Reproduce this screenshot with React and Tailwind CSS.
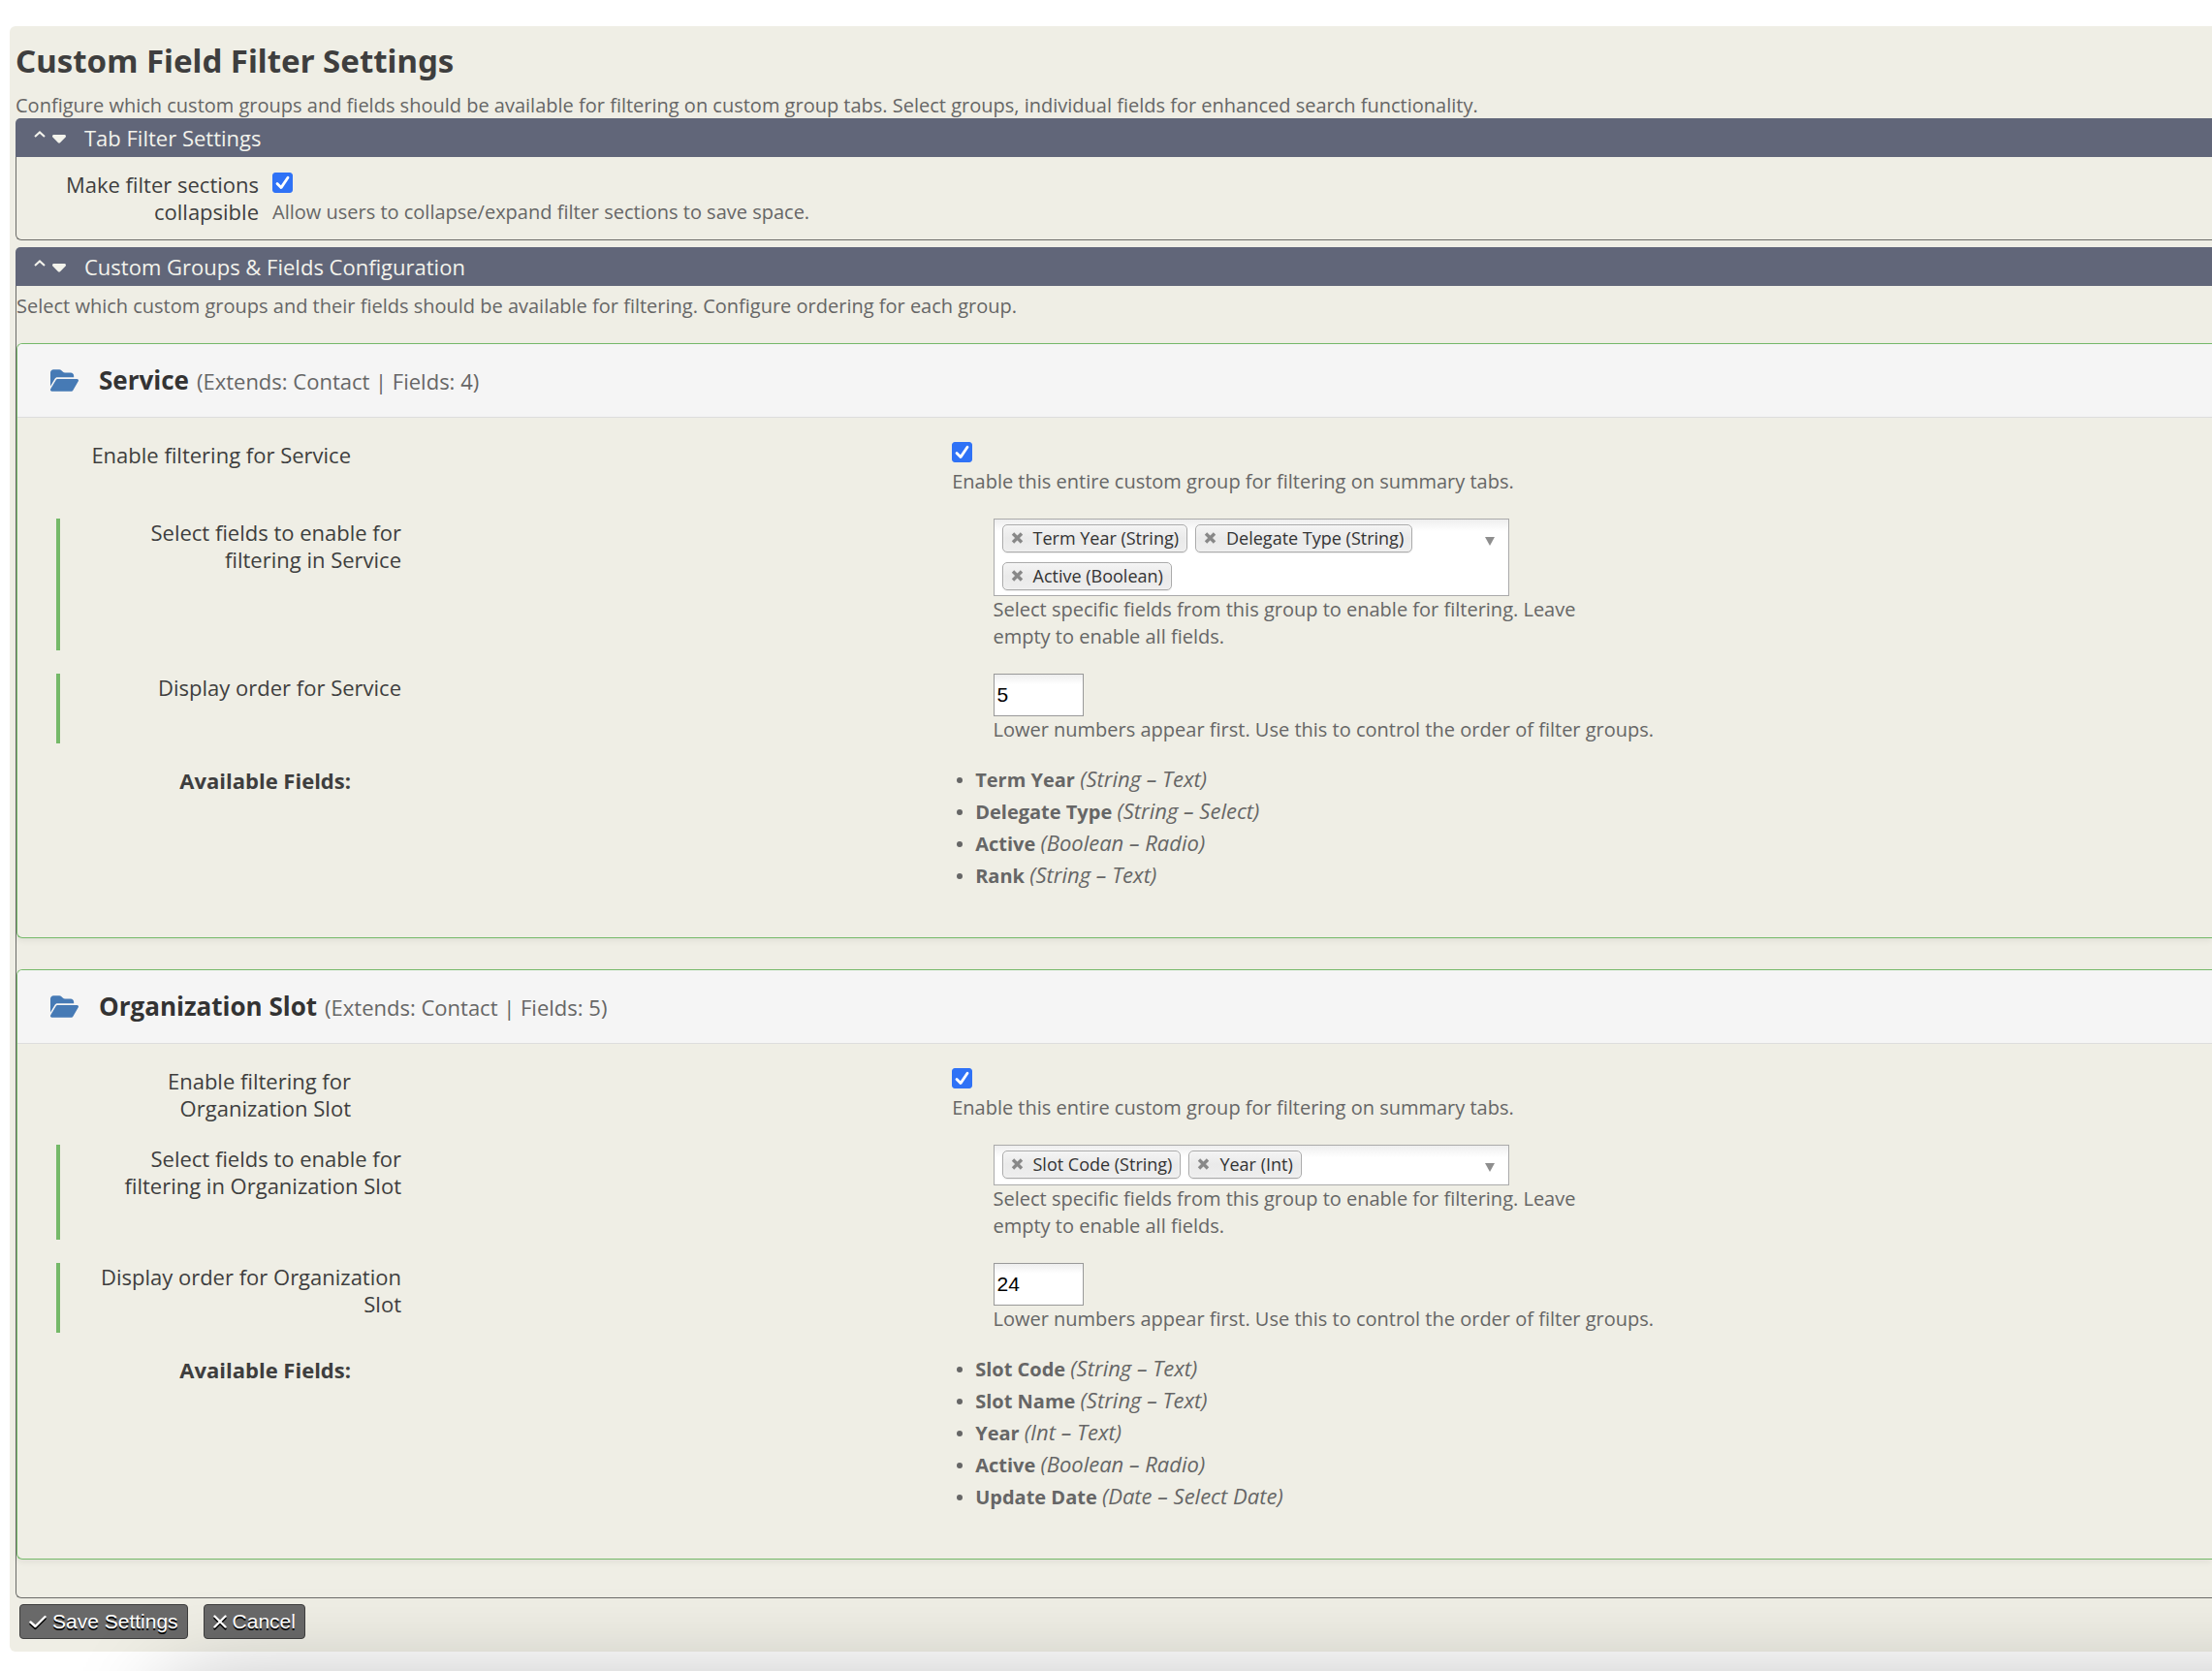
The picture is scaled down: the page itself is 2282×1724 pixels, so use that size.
import { FaFolderOpen } from "react-icons/fa6";

const groups = [
  {
    id: "service",
    name: "Service",
    extendsType: "Contact",
    order: 5,
    selected: ["Term Year (String)", "Delegate Type (String)", "Active (Boolean)"],
    fields: [
      ["Term Year", "(String – Text)"],
      ["Delegate Type", "(String – Select)"],
      ["Active", "(Boolean – Radio)"],
      ["Rank", "(String – Text)"],
    ],
  },
  {
    id: "organization-slot",
    name: "Organization Slot",
    extendsType: "Contact",
    order: 24,
    selected: ["Slot Code (String)", "Year (Int)"],
    fields: [
      ["Slot Code", "(String – Text)"],
      ["Slot Name", "(String – Text)"],
      ["Year", "(Int – Text)"],
      ["Active", "(Boolean – Radio)"],
      ["Update Date", "(Date – Select Date)"],
    ],
  },
];

function Checkbox({ id }) {
  return (
    <span className="relative block size-[21px]">
      <input
        id={id}
        type="checkbox"
        defaultChecked
        className="peer block size-[21px] appearance-none rounded-[3px] border border-[#8a8a8a] bg-white checked:border-[#2f72f6] checked:bg-[#2f72f6]"
      />
      <svg viewBox="0 0 21 21" className="pointer-events-none absolute inset-0 hidden size-[21px] peer-checked:block" aria-hidden="true">
        <path d="M5 11.5 9 15.6 16 5.2" fill="none" stroke="white" strokeWidth="2.8" strokeLinecap="round" strokeLinejoin="round" />
      </svg>
    </span>
  );
}

function SectionHeader({ children }) {
  return (
    <button type="button" className="flex h-10 w-full items-center rounded-tl-[5px] bg-[#616679] pl-[19px] text-left text-[22px] text-[#f3f3ec]">
      <svg viewBox="0 0 12 7" className="mb-2 h-[7px] w-3" aria-hidden="true">
        <path d="M1 6 6 1.4 11 6" fill="none" stroke="currentColor" strokeWidth="2" />
      </svg>
      <svg viewBox="0 0 14 9" className="ml-[7px] mt-[3px] h-[9px] w-3.5" aria-hidden="true">
        <path d="M1.200 0h11.600q1.200.200 1.200 1.400 0 .800-.600 1.400L8 8.300q-1 .900-2 0L.600 2.800Q0 2.200 0 1.400 0 .200 1.200 0Z" fill="currentColor" />
      </svg>
      <span className="ml-[19px]">{children}</span>
    </button>
  );
}

function Help({ children }) {
  return <p className="max-w-[640px] text-[20px] leading-7 text-[#666]">{children}</p>;
}

function Tag({ children }) {
  return (
    <li className="flex h-[29px] items-center gap-2.5 rounded-[5px] border border-[#aaa] bg-linear-to-b from-[#f4f4f4] via-[#eaeaea] to-[#eee] px-2 pb-px text-[18px] leading-6 text-[#333] shadow-[inset_0_0_2px_#fff,0_1px_1px_rgba(0,0,0,0.08)]">
      <button type="button" aria-label={`Remove ${children}`}>
        <svg viewBox="0 0 13 12" className="h-3 w-[13px]" aria-hidden="true">
          <path d="M2 1.500 11 10.500M11 1.500 2 10.500" stroke="#888" strokeWidth="3.400" />
        </svg>
      </button>
      {children}
    </li>
  );
}

function IndentedRow({ label, htmlFor, children }) {
  return (
    <div className="grid grid-cols-[5fr_7fr] border-l-4 border-[#75b969]">
      <label htmlFor={htmlFor} className="ml-10 w-[312px] text-right text-[22px] leading-7">
        {label}
      </label>
      <div className="pl-10">{children}</div>
    </div>
  );
}

function Group({ group }) {
  return (
    <section className="rounded-l-[6px] border border-r-0 border-[#75b969] shadow-[0_3px_6px_rgba(0,0,0,0.06)]">
      <header className="flex h-19 items-center rounded-tl-[5px] border-b border-[#ddd] bg-[#f5f5f5] pl-[34px]">
        <FaFolderOpen className="size-[29px] text-[#467ab5]" aria-hidden="true" />
        <h2 className="ml-[21px] flex items-baseline gap-2 text-[26px] font-bold text-[#333]">
          {group.name}
          <span className="text-[22px] font-normal text-[#666]">
            (Extends: {group.extendsType} | Fields: {group.fields.length})
          </span>
        </h2>
      </header>
      <div className="flex flex-col gap-6 pt-6 pr-1.5 pb-11 pl-10">
        <div className="grid grid-cols-[5fr_7fr]">
          <label htmlFor={`${group.id}-enable`} className="w-[304px] text-right text-[22px] leading-7">
            Enable filtering for {group.name}
          </label>
          <div>
            <div className="h-7 pt-px">
              <Checkbox id={`${group.id}-enable`} />
            </div>
            <Help>Enable this entire custom group for filtering on summary tabs.</Help>
          </div>
        </div>
        <IndentedRow label={`Select fields to enable for filtering in ${group.name}`} htmlFor={`${group.id}-fields`}>
          <div className="relative min-h-[42px] w-[532px] border border-[#aaa] bg-white bg-linear-to-b from-[#eee] to-white to-[12px] pt-[5px] pr-14 pb-[5px] pl-2">
            <ul className="flex flex-wrap gap-x-2 gap-y-2.5">
              {group.selected.map((item) => (
                <Tag key={item}>{item}</Tag>
              ))}
            </ul>
            <button id={`${group.id}-fields`} type="button" aria-label="Open field list" className="absolute top-[18px] right-3.5 flex">
              <svg viewBox="0 0 10 9" className="h-[9px] w-2.5" aria-hidden="true">
                <path d="M0 0h10L5 9Z" fill="#8e8e8e" />
              </svg>
            </button>
          </div>
          <Help>Select specific fields from this group to enable for filtering. Leave empty to enable all fields.</Help>
        </IndentedRow>
        <IndentedRow label={`Display order for ${group.name}`} htmlFor={`${group.id}-order`}>
          <input
            id={`${group.id}-order`}
            type="text"
            defaultValue={group.order}
            className="block h-11 w-[93px] border border-[#999] bg-white bg-linear-to-b from-[#eee] to-white to-[10px] px-[3px] font-['Liberation_Sans',Arial,sans-serif] text-[21px] text-black"
          />
          <p className="text-[20px] leading-7 text-[#666]">Lower numbers appear first. Use this to control the order of filter groups.</p>
        </IndentedRow>
        <div className="grid grid-cols-[5fr_7fr]">
          <p className="w-[304px] text-right text-[22px] leading-7 font-bold">Available Fields:</p>
          <ul className="text-[20px] leading-7 text-[#666]">
            {group.fields.map(([name, type]) => (
              <li key={name} className="mb-[5px] flex h-7 items-center">
                <span className="mr-[13px] ml-[5px] size-1.5 rounded-full bg-[#666]" />
                <span>
                  <strong>{name}</strong> <em className="text-[22px] leading-none">{type}</em>
                </span>
              </li>
            ))}
          </ul>
        </div>
      </div>
    </section>
  );
}

const actionButton =
  "flex h-9 items-center gap-1.5 rounded-[4px] border border-[#3e3e3e] bg-[#696969] px-[9px] font-['Liberation_Sans',Arial,sans-serif] text-[21px] text-white [text-shadow:0_2px_0_#000]";

export default function App() {
  return (
    <div className="relative min-h-screen overflow-hidden bg-white pt-[27px] pl-2.5 font-['Open_Sans','Noto_Sans',sans-serif] text-[#3e3e3e]">
      <main className="rounded-l-[6px] bg-[#efeee5] pt-4 pb-[13px] pl-1.5">
        <h1 className="font-['Noto_Sans',sans-serif] text-[33px] leading-10 font-bold">Custom Field Filter Settings</h1>
        <p className="pt-3 text-[20px] leading-[27px] text-[#666]">
          Configure which custom groups and fields should be available for filtering on custom group tabs. Select groups, individual fields for enhanced search functionality.
        </p>
        <section>
          <SectionHeader>Tab Filter Settings</SectionHeader>
          <div className="flex gap-3.5 rounded-bl-[6px] border-b border-l border-[#6b6b68] pt-3.5 pb-3.5 pl-10">
            <label htmlFor="collapsible" className="w-[210px] text-right text-[22px] leading-7">
              Make filter sections collapsible
            </label>
            <div>
              <div className="h-[29px] pt-0.5">
                <Checkbox id="collapsible" />
              </div>
              <Help>Allow users to collapse/expand filter sections to save space.</Help>
            </div>
          </div>
        </section>
        <section className="mt-[7px]">
          <SectionHeader>Custom Groups &amp; Fields Configuration</SectionHeader>
          <div className="rounded-bl-[6px] border-b border-l border-[#6b6b68] pt-[7px] pb-[39px]">
            <p className="mb-6 text-[20px] leading-7 text-[#666]">
              Select which custom groups and their fields should be available for filtering. Configure ordering for each group.
            </p>
            <div className="flex flex-col gap-8">
              {groups.map((group) => (
                <Group key={group.id} group={group} />
              ))}
            </div>
          </div>
        </section>
        <div className="flex gap-4 pt-1.5 pl-1">
          <button type="button" className={actionButton}>
            <svg viewBox="0 0 18 14" className="h-3.5 w-[18px] drop-shadow-[0_2px_0_#000]" aria-hidden="true">
              <path d="M1.500 7.500 6.500 12 16.500 2" fill="none" stroke="currentColor" strokeWidth="2.400" strokeLinecap="round" strokeLinejoin="round" />
            </svg>
            Save Settings
          </button>
          <button type="button" className={actionButton}>
            <svg viewBox="0 0 14 14" className="size-3.5 drop-shadow-[0_2px_0_#000]" aria-hidden="true">
              <path d="M1.500 1.500 12.500 12.500M12.500 1.500 1.500 12.500" stroke="currentColor" strokeWidth="2.400" strokeLinecap="round" />
            </svg>
            Cancel
          </button>
        </div>
      </main>
      {/* soft shadow rising from below the page's lower edge */}
      <div className="pointer-events-none absolute top-[calc(100%+20px)] -right-40 left-[175px] h-52 shadow-[0_0_100px_rgba(0,0,0,0.33)]" />
    </div>
  );
}
